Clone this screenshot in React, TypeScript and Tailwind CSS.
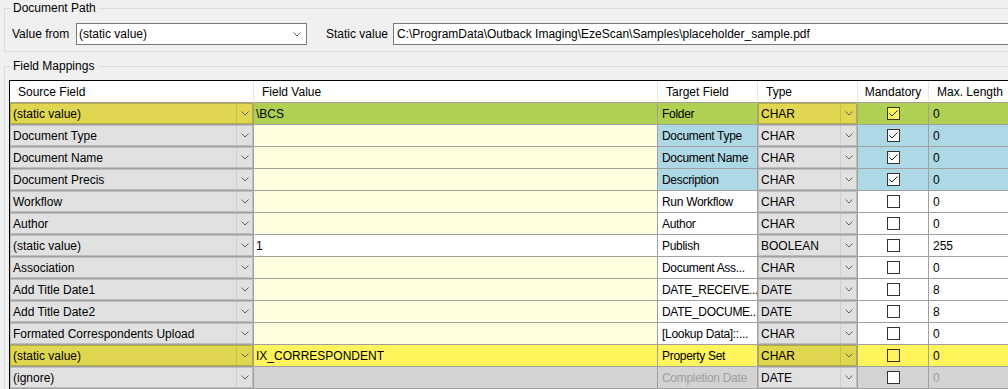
import React from "react";

const GREEN = "bg-[#afd050]";
const LY = "bg-[#ffffe0]";
const BLUE = "bg-[#add8e6]";
const WHITE = "bg-white";
const BRIGHT = "bg-[#fff45c]";
const GRAYC = "bg-[#d3d3d3]";

interface Row {
  src: string;
  srcYellow?: boolean;
  val: string;
  valBg: string;
  tgt: string;
  tgtBg: string;
  tgtMuted?: boolean;
  type: string;
  typeYellow?: boolean;
  mand: boolean;
  mandBg: string;
  boxBg?: string;
  max: string;
  maxBg: string;
}

const rows: Row[] = [
  { src: "(static value)", srcYellow: true, val: "\\BCS", valBg: GREEN, tgt: "Folder", tgtBg: GREEN, type: "CHAR", typeYellow: true, mand: true, mandBg: GREEN, boxBg: BRIGHT, max: "0", maxBg: GREEN },
  { src: "Document Type", val: "", valBg: LY, tgt: "Document Type", tgtBg: BLUE, type: "CHAR", mand: true, mandBg: BLUE, max: "0", maxBg: BLUE },
  { src: "Document Name", val: "", valBg: LY, tgt: "Document Name", tgtBg: BLUE, type: "CHAR", mand: true, mandBg: BLUE, max: "0", maxBg: BLUE },
  { src: "Document Precis", val: "", valBg: LY, tgt: "Description", tgtBg: BLUE, type: "CHAR", mand: true, mandBg: BLUE, max: "0", maxBg: BLUE },
  { src: "Workflow", val: "", valBg: LY, tgt: "Run Workflow", tgtBg: WHITE, type: "CHAR", mand: false, mandBg: WHITE, max: "0", maxBg: WHITE },
  { src: "Author", val: "", valBg: LY, tgt: "Author", tgtBg: WHITE, type: "CHAR", mand: false, mandBg: WHITE, max: "0", maxBg: WHITE },
  { src: "(static value)", val: "1", valBg: WHITE, tgt: "Publish", tgtBg: WHITE, type: "BOOLEAN", mand: false, mandBg: WHITE, max: "255", maxBg: WHITE },
  { src: "Association", val: "", valBg: LY, tgt: "Document Ass...", tgtBg: WHITE, type: "CHAR", mand: false, mandBg: WHITE, max: "0", maxBg: WHITE },
  { src: "Add Title Date1", val: "", valBg: LY, tgt: "DATE_RECEIVE...", tgtBg: WHITE, type: "DATE", mand: false, mandBg: WHITE, max: "8", maxBg: WHITE },
  { src: "Add Title Date2", val: "", valBg: LY, tgt: "DATE_DOCUME...", tgtBg: WHITE, type: "DATE", mand: false, mandBg: WHITE, max: "8", maxBg: WHITE },
  { src: "Formated Correspondents Upload", val: "", valBg: LY, tgt: "[Lookup Data]::...", tgtBg: WHITE, type: "CHAR", mand: false, mandBg: WHITE, max: "0", maxBg: WHITE },
  { src: "(static value)", srcYellow: true, val: "IX_CORRESPONDENT", valBg: BRIGHT, tgt: "Property Set", tgtBg: BRIGHT, type: "CHAR", typeYellow: true, mand: false, mandBg: BRIGHT, boxBg: BRIGHT, max: "0", maxBg: BRIGHT },
  { src: "(ignore)", val: "", valBg: GRAYC, tgt: "Completion Date", tgtBg: GRAYC, tgtMuted: true, type: "DATE", mand: false, mandBg: GRAYC, max: "0", maxBg: GRAYC },
];

function Chevron() {
  return (
    <svg width="8" height="5" viewBox="0 0 8 5" className="block">
      <polyline points="0.5,0.5 4,4 7.5,0.5" fill="none" stroke="#606060" strokeWidth="1" />
    </svg>
  );
}

function ComboCell({ text, yellow }: { text: string; yellow?: boolean }) {
  return (
    <div className="h-[22px] border-b border-r border-[#a0a0a0] flex">
      <div
        className={
          yellow
            ? "flex-1 flex border border-[#b5ab3c] bg-[#e1d64f]"
            : "flex-1 flex border border-[#bdbdbd] bg-[#e1e1e1]"
        }
      >
        <div className="flex-1 flex items-center pl-[2px] whitespace-nowrap overflow-hidden">{text}</div>
        <div
          className={
            yellow
              ? "w-[16px] flex items-center justify-center border-l border-[#c9bf4a]"
              : "w-[16px] flex items-center justify-center border-l border-[#cfcfcf]"
          }
        >
          <Chevron />
        </div>
      </div>
    </div>
  );
}

function CheckBox({ checked, bg }: { checked: boolean; bg?: string }) {
  return (
    <div className={"w-[13px] h-[13px] border border-[#333333] " + (bg ?? "bg-white")}>
      {checked && (
        <svg width="11" height="11" viewBox="0 0 11 11" className="block">
          <polyline points="1.5,5.5 4,8 9.5,2.5" fill="none" stroke="#222222" strokeWidth="1" />
        </svg>
      )}
    </div>
  );
}

export default function App() {
  const headers = ["Source Field", "Field Value", "Target Field", "Type", "Mandatory", "Max. Length"];
  return (
    <div
      className="w-[1008px] h-[389px] overflow-hidden bg-[#f0f0f0] text-[12px] text-black"
      style={{ fontFamily: '"Liberation Sans", Arial, sans-serif' }}
    >
      <fieldset className="ml-[4px] w-[1030px] border border-[#dcdcdc] pl-[6px] pt-[7px] pb-[6px]">
        <legend className="px-[2px] leading-[16px]">Document Path</legend>
        <div className="flex items-center h-[22px]">
          <span className="w-[65px] pl-[1px]">Value from</span>
          <div className="w-[231px] h-[22px] bg-white border border-[#7a7a7a] flex items-center pl-[2px] pr-[5px]">
            <span className="flex-1">(static value)</span>
            <Chevron />
          </div>
          <span className="ml-[19px] w-[67px]">Static value</span>
          <div className="flex-1 h-[22px] bg-white border border-[#7a7a7a] flex items-center pl-[3px] whitespace-nowrap">
            C:\ProgramData\Outback Imaging\EzeScan\Samples\placeholder_sample.pdf
          </div>
        </div>
      </fieldset>

      <fieldset className="ml-[4px] mt-[6px] w-[1030px] h-[340px] border border-[#dcdcdc] pl-[4px] pt-[5px]">
        <legend className="px-[4px] leading-[17px]">Field Mappings</legend>
        <div className="border-l border-t border-[#000000] grid grid-cols-[244px_404px_100px_100px_71px_200px]">
          {headers.map((h, i) => (
            <div
              key={h}
              className={
                "h-[22px] bg-white border-b border-[#a0a0a0] flex items-center whitespace-nowrap " +
                (i === 4 ? "justify-center border-r border-r-[#e5e5e5]" : "pl-[8px] border-r border-r-[#e5e5e5]")
              }
            >
              {h}
            </div>
          ))}
          {rows.map((r, i) => (
            <React.Fragment key={i}>
              <ComboCell text={r.src} yellow={r.srcYellow} />
              <div className={"h-[22px] border-b border-r border-[#a0a0a0] flex items-center pl-[2px] " + r.valBg}>
                {r.val}
              </div>
              <div
                className={
                  "h-[22px] border-b border-r border-[#a0a0a0] flex items-center pl-[4px] whitespace-nowrap overflow-hidden tracking-[-0.3px] " +
                  r.tgtBg +
                  (r.tgtMuted ? " text-[#a0a0a0]" : "")
                }
              >
                {r.tgt}
              </div>
              <ComboCell text={r.type} yellow={r.typeYellow} />
              <div className={"h-[22px] border-b border-r border-[#a0a0a0] flex items-center justify-center " + r.mandBg}>
                <CheckBox checked={r.mand} bg={r.boxBg} />
              </div>
              <div
                className={
                  "h-[22px] border-b border-[#a0a0a0] flex items-center pl-[4px] " +
                  r.maxBg +
                  (r.tgtMuted ? " text-[#a0a0a0]" : "")
                }
              >
                {r.max}
              </div>
            </React.Fragment>
          ))}
        </div>
      </fieldset>
    </div>
  );
}
